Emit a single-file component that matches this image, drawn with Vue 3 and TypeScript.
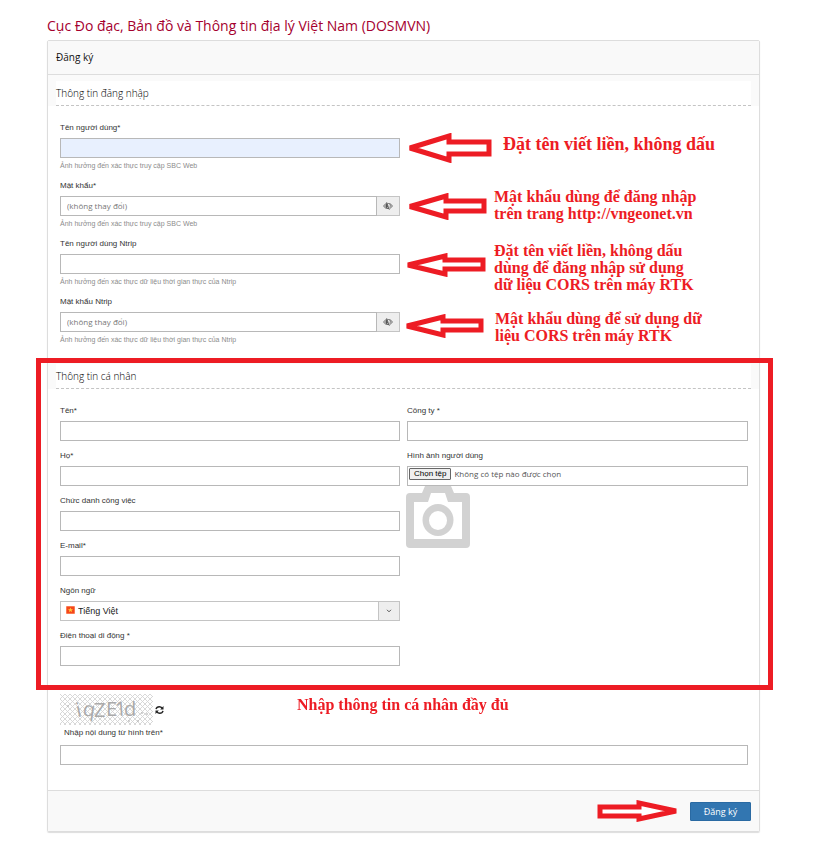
<script setup lang="ts">
import { ref } from 'vue'

interface Field {
  id: string
  label: string
  type?: string
  secret?: boolean
  filled?: boolean
  help?: string
}

interface Note {
  name: string
  lines: string[]
}

const webHelp = 'Ảnh hưởng đến xác thực truy cập SBC Web'
const ntripHelp = 'Ảnh hưởng đến xác thực dữ liệu thời gian thực của Ntrip'

const loginFields: Field[] = [
  { id: 'username', label: 'Tên người dùng*', filled: true, help: webHelp },
  { id: 'password', label: 'Mật khẩu*', secret: true, help: webHelp },
  { id: 'ntrip-user', label: 'Tên người dùng Ntrip', help: ntripHelp },
  { id: 'ntrip-password', label: 'Mật khẩu Ntrip', secret: true, help: ntripHelp },
]

const nameFields: Field[] = [
  { id: 'first-name', label: 'Tên*' },
  { id: 'last-name', label: 'Họ*' },
  { id: 'job-title', label: 'Chức danh công việc' },
  { id: 'email', label: 'E-mail*', type: 'email' },
]

const notes: Note[] = [
  { name: 'user', lines: ['Đặt tên viết liền, không dấu'] },
  { name: 'pass', lines: ['Mật khẩu dùng để đăng nhập', 'trên trang http://vngeonet.vn'] },
  { name: 'ntrip', lines: ['Đặt tên viết liền, không dấu', 'dùng để đăng nhập sử dụng', 'dữ liệu CORS trên máy RTK'] },
  { name: 'ntrip-pass', lines: ['Mật khẩu dùng để sử dụng dữ', 'liệu CORS trên máy RTK'] },
]

const visible = ref<Record<string, boolean>>({})
const toggle = (id: string) => {
  visible.value[id] = !visible.value[id]
}
</script>

<template>
  <main class="page">
    <h1 class="title">Cục Đo đạc, Bản đồ và Thông tin địa lý Việt Nam (DOSMVN)</h1>
    <form class="card" @submit.prevent>
      <header class="card-head">Đăng ký</header>

      <section class="section">
        <div class="strip"><h2>Thông tin đăng nhập</h2></div>
        <div class="columns">
          <div class="stack">
            <div v-for="f in loginFields" :key="f.id" class="field">
              <label :for="f.id">{{ f.label }}</label>
              <div v-if="f.secret" class="group">
                <input :id="f.id" class="box" :type="visible[f.id] ? 'text' : 'password'" placeholder="(không thay đổi)" />
                <button type="button" class="eye" aria-label="Hiện mật khẩu" @click="toggle(f.id)">
                  <svg viewBox="0 0 10 8" width="10" height="8">
                    <path d="M.5 4Q2.300 1.400 5 1.400Q7.700 1.400 9.500 4Q7.700 6.600 5 6.600Q2.300 6.600 .5 4Z" fill="none" stroke="#555" stroke-width=".9" />
                    <path d="M4.400 1.600A2.500 2.500 0 0 0 3.600 6.200L5 5Z" fill="#555" />
                    <path d="M7 2.300Q8 3.800 6.600 5.700" fill="none" stroke="#555" stroke-width=".8" />
                    <path d="M4.300 0L7 8" stroke="#eee" stroke-width=".8" />
                    <path d="M3.600 .2L6.400 7.800" stroke="#555" stroke-width=".8" />
                  </svg>
                </button>
              </div>
              <input v-else :id="f.id" class="box" :class="{ filled: f.filled }" type="text" />
              <small>{{ f.help }}</small>
            </div>
          </div>
          <div class="notes">
            <svg class="arrow arrow-user" viewBox="0 0 85 30" width="85" height="30">
              <path d="M3 15L42 3V9H82V21H42V27Z" />
            </svg>
            <svg class="arrow arrow-pass" viewBox="0 0 80 27" width="80" height="27">
              <path d="M3 13.500L39 3V8H77V18H39V24Z" />
            </svg>
            <svg class="arrow arrow-ntrip" viewBox="0 0 81 24" width="81" height="24">
              <path d="M3 12L40 3V7H78V16H40V21Z" />
            </svg>
            <svg class="arrow arrow-ntrip-pass" viewBox="0 0 80 24" width="80" height="24">
              <path d="M3 12L39 3V7H77V16H39V21Z" />
            </svg>
            <p v-for="n in notes" :key="n.name" class="note" :class="'note-' + n.name">
              <span v-for="line in n.lines" :key="line">{{ line }}</span>
            </p>
          </div>
        </div>
      </section>

      <section class="section personal">
        <div class="strip"><h2>Thông tin cá nhân</h2></div>
        <div class="columns">
          <div class="stack">
            <div v-for="f in nameFields" :key="f.id" class="field">
              <label :for="f.id">{{ f.label }}</label>
              <input :id="f.id" class="box" :type="f.type ?? 'text'" />
            </div>
            <div class="field">
              <label for="language">Ngôn ngữ</label>
              <div class="select">
                <select id="language" class="box">
                  <option>Tiếng Việt</option>
                </select>
                <svg class="flag" viewBox="0 0 9 8" width="9" height="8">
                  <rect width="9" height="8" rx="1" fill="#fb7a50" />
                  <rect x="1" y="1" width="7" height="6" fill="#f4471c" />
                  <path d="M4.500 1.500L5.200 3.300H7L5.600 4.400L6.100 6.200L4.500 5.100L2.900 6.200L3.400 4.400L2 3.300H3.800Z" fill="#ffc83a" />
                </svg>
                <span class="caret">
                  <svg viewBox="0 0 6 4" width="6" height="4"><path d="M1 .8L3 2.800L5 .8" fill="none" stroke="#555" /></svg>
                </span>
              </div>
            </div>
            <div class="field">
              <label for="phone">Điện thoại di động *</label>
              <input id="phone" class="box" type="tel" />
            </div>
          </div>
          <div class="stack">
            <div class="field">
              <label for="company">Công ty *</label>
              <input id="company" class="box" type="text" />
            </div>
            <div class="field">
              <label for="photo">Hình ảnh người dùng</label>
              <div class="box file">
                <span class="file-button">Chọn tệp</span>
                <span>Không có tệp nào được chọn</span>
                <input id="photo" type="file" />
              </div>
              <svg class="camera" viewBox="0 0 64 63" width="64" height="63">
                <path
                  fill="#d2d2d2"
                  fill-rule="evenodd"
                  d="M4 8H16L19 1Q20 0 22 0H42Q44 0 45 1L48 8H60Q64 8 64 12V59Q64 63 60 63H4Q0 63 0 59V12Q0 8 4 8ZM8 17V54H56V17H42L39 8H25L22 17ZM32 19A15.500 16 0 1 1 32 51A15.500 16 0 1 1 32 19ZM32 26A9 9.500 0 1 0 32 45A9 9.500 0 1 0 32 26Z"
                />
              </svg>
            </div>
          </div>
        </div>
      </section>

      <section class="captcha">
        <div class="captcha-row">
          <svg class="captcha-image" viewBox="0 0 93 31" width="93" height="31" role="img" aria-label="Mã xác nhận">
            <defs>
              <pattern id="mesh" width="5" height="5" patternUnits="userSpaceOnUse">
                <path d="M0 0L5 5M5 0L0 5" stroke="#d4d4d4" stroke-width=".9" />
              </pattern>
            </defs>
            <rect width="93" height="31" fill="#fff" />
            <rect width="93" height="31" fill="url(#mesh)" />
            <g class="captcha-text">
              <text x="16" y="23" transform="rotate(-12 18 16)">i</text>
              <text x="23" y="22" transform="rotate(8 28 17)">q</text>
              <text x="34" y="23">Z</text>
              <text x="46" y="22">E</text>
              <text x="55" y="22" transform="rotate(-4 60 16)">1</text>
              <text x="64" y="22">d</text>
            </g>
            <path d="M81 19h2M86 20h2M77 27h2M7 12h2M68 27h2" stroke="#aaa" />
          </svg>
          <button type="button" class="refresh" aria-label="Tải lại">
            <svg viewBox="0 0 9 10" width="9" height="10">
              <path d="M1 4.200Q1.600 1.700 4.300 1.700Q6 1.700 7.300 3.200M8 5.800Q7.400 8.300 4.700 8.300Q3 8.300 1.700 6.800" fill="none" stroke="#222" stroke-width="1.400" />
              <path d="M8.500 1V4.400H5.200ZM.5 9V5.600H3.800Z" fill="#222" />
            </svg>
          </button>
          <p class="note note-personal">Nhập thông tin cá nhân đầy đủ</p>
        </div>
        <div class="field">
          <label class="captcha-label" for="captcha">Nhập nội dung từ hình trên*</label>
          <input id="captcha" class="box" type="text" />
        </div>
      </section>

      <footer class="card-foot">
        <svg class="arrow" viewBox="0 0 82 22" width="82" height="22">
          <path d="M79 11L42 3V7H3V16H42V19Z" />
        </svg>
        <button type="submit" class="submit">Đăng ký</button>
      </footer>
    </form>
  </main>
</template>

<style>
body {
  margin: 0;
  background: #fff;
}
</style>

<style scoped>
.page {
  padding: 12px 56px 15px 47px;
  font-family: 'Liberation Sans', Arial, sans-serif;
  font-size: 8px;
  color: #333;
}
.page * {
  box-sizing: border-box;
}
.title {
  margin: 0;
  height: 28px;
  font: 400 14px/28px 'Open Sans', sans-serif;
  color: #a5002e;
  white-space: nowrap;
}
.card {
  border: 1px solid #ddd;
  border-radius: 2px;
  box-shadow: 0 1px 1px #ddd;
}
.card-head {
  height: 34px;
  padding-left: 8px;
  border-bottom: 1px solid #ddd;
  background: #f9f9f9;
  font: 400 10px/33px 'Open Sans', sans-serif;
  color: #111;
}
.strip {
  padding: 6px 8px 0;
  background: #fafafa;
}
.strip h2 {
  margin: 0;
  height: 25px;
  border-bottom: 1px dashed #c4c4c4;
  background: #fff;
  font: 300 10px/25px 'Open Sans', sans-serif;
  color: #000;
}
.columns {
  display: grid;
  grid-template-columns: 340fr 341fr;
  gap: 7px;
  padding: 15px 11px 13px 12px;
}
.stack {
  display: flex;
  flex-direction: column;
  gap: 8px;
}
.field {
  display: flex;
  flex-direction: column;
}
.field label {
  height: 12px;
  margin-bottom: 5px;
  line-height: 14px;
}
.field small {
  height: 12px;
  margin-top: 1px;
  font-size: 7px;
  line-height: 14px;
  color: #8c8c8c;
}
.box {
  width: 100%;
  height: 20px;
  margin: 0;
  padding: 0 6px 2px;
  border: 1px solid #b8b8b8;
  border-radius: 0;
  outline: none;
  background: #fff;
  font: 400 8px/16px 'Open Sans', sans-serif;
  color: #555;
}
.box::placeholder {
  color: #777;
  opacity: 1;
}
.box.filled {
  background: #e8f0fe;
}
.group {
  display: flex;
}
.eye {
  display: flex;
  flex: 0 0 23px;
  align-items: center;
  justify-content: center;
  height: 20px;
  padding: 0;
  border: 1px solid #c4c4c4;
  border-left: 0;
  background: #eee;
}
.notes {
  position: relative;
}
.arrow {
  display: block;
  fill: #fff;
  stroke: #ed1c24;
  stroke-width: 5px;
  stroke-miterlimit: 2;
}
.notes .arrow {
  position: absolute;
}
.arrow-user {
  left: 0;
  top: 12px;
}
.arrow-pass {
  left: 0;
  top: 72px;
}
.arrow-ntrip {
  left: -2px;
  top: 132px;
}
.arrow-ntrip-pass {
  left: -3px;
  top: 193px;
}
.note {
  position: absolute;
  margin: 0;
  font: 700 16px/17px 'Liberation Serif', 'Times New Roman', serif;
  color: #ed1c24;
  white-space: nowrap;
}
.note span {
  display: block;
}
.note-user {
  left: 96px;
  top: 15px;
  font-size: 18px;
}
.note-pass {
  left: 87px;
  top: 67px;
}
.note-ntrip {
  left: 87px;
  top: 121px;
}
.note-ntrip-pass {
  left: 88px;
  top: 189px;
}
.personal {
  position: relative;
}
.personal .columns {
  padding-bottom: 24px;
}
.personal::after {
  content: '';
  position: absolute;
  inset: 0 -14px 0 -12px;
  border: 5px solid #ed1c24;
  pointer-events: none;
}
.select {
  position: relative;
}
.select select {
  display: block;
  padding: 0 28px 0 17px;
  border-color: #c4c4c4;
  appearance: none;
  font: 400 9px/18px 'Liberation Sans', Arial, sans-serif;
  color: #222;
}
.flag {
  position: absolute;
  left: 6px;
  top: 5px;
}
.caret {
  position: absolute;
  top: 0;
  right: 0;
  display: flex;
  align-items: center;
  justify-content: center;
  width: 22px;
  height: 20px;
  border: 1px solid #c4c4c4;
  background: #eee;
  pointer-events: none;
}
.file {
  position: relative;
  display: flex;
  align-items: flex-start;
  gap: 3px;
  padding: 1px;
  line-height: 12px;
}
.file-button {
  height: 12px;
  padding: 0 4px;
  border: 1px solid #666;
  border-radius: 1px;
  background: #efefef;
  font: 400 8px/10px 'Liberation Sans', Arial, sans-serif;
  color: #000;
}
.file input {
  position: absolute;
  inset: 0;
  width: 100%;
  opacity: 0;
}
.camera {
  display: block;
  margin: -1px 0 0 -1px;
}
.captcha {
  padding: 4px 11px 25px 12px;
}
.captcha-row {
  position: relative;
  display: flex;
  align-items: center;
  gap: 2px;
}
.captcha-text {
  font: 400 20px 'Open Sans', sans-serif;
  fill: #aaa;
}
.refresh {
  display: flex;
  padding: 0;
  border: 0;
  background: none;
}
.note-personal {
  left: 237px;
  top: 2px;
}
.captcha .captcha-label {
  margin: 1px 0 7px 4px;
}
.card-foot {
  display: flex;
  align-items: center;
  justify-content: flex-end;
  gap: 11px;
  height: 41px;
  padding-right: 8px;
  border-top: 1px solid #ddd;
  background: #f9f9f9;
}
.submit {
  width: 61px;
  height: 19px;
  padding: 0;
  border: 1px solid #2a6aa3;
  border-radius: 1px;
  background: #3276b1;
  font: 400 9px/17px 'Open Sans', sans-serif;
  color: #fff;
}
</style>
